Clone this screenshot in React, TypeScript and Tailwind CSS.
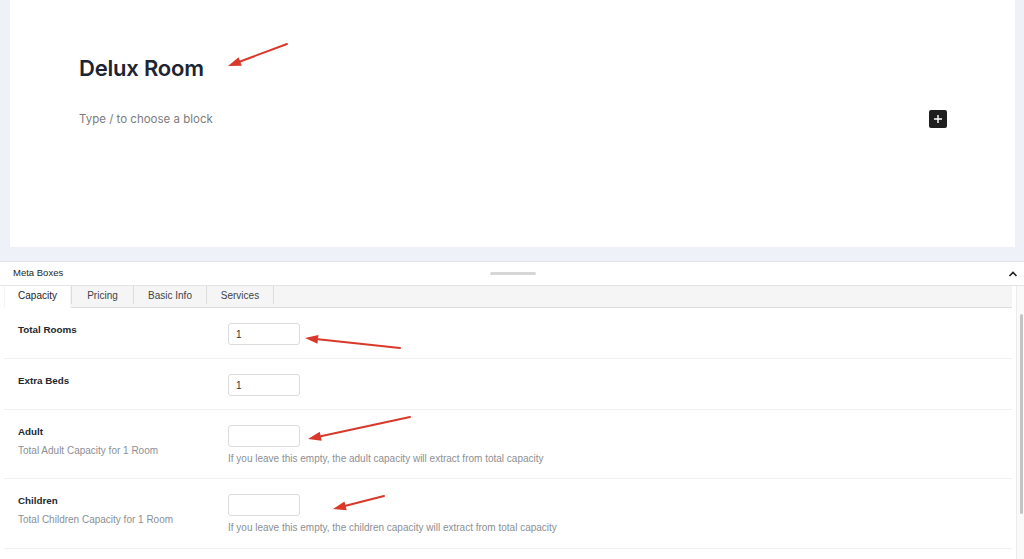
import React from "react";

const Arrow = ({ x1, y1, x2, y2 }: { x1: number; y1: number; x2: number; y2: number }) => {
  const ang = Math.atan2(y2 - y1, x2 - x1);
  const len = 13;
  const w = 4.5;
  const bx = x2 - len * Math.cos(ang);
  const by = y2 - len * Math.sin(ang);
  const px = -Math.sin(ang) * w;
  const py = Math.cos(ang) * w;
  return (
    <g>
      <line x1={x1} y1={y1} x2={bx} y2={by} stroke="#d8392b" strokeWidth={2} strokeLinecap="round" />
      <polygon points={`${x2},${y2} ${bx + px},${by + py} ${bx - px},${by - py}`} fill="#d8392b" />
    </g>
  );
};

const Row = ({
  label,
  desc,
  value,
  help,
  h,
}: {
  label: string;
  desc?: string;
  value?: string;
  help?: string;
  h: string;
}) => (
  <div className={`flex border-b border-[#f0f0f0] pl-[14px] pt-[15px] ${h}`}>
    <div className="w-[210px] shrink-0">
      <div className="text-[9.8px] leading-[14px] font-bold text-[#23282d]">{label}</div>
      {desc && <div className="mt-[5px] text-[10px] leading-[13px] text-[#8c8f94]">{desc}</div>}
    </div>
    <div className="flex flex-col">
      <div className="flex h-[22px] w-[72px] items-center rounded-[3px] border border-[#dcdcde] bg-white pl-[7px] text-[10px] text-[#2c3338]">
        {value}
      </div>
      {help && <div className="mt-[5px] text-[10px] leading-[13px] text-[#8c8f94]">{help}</div>}
    </div>
  </div>
);

export default function App() {
  return (
    <div
      className="relative h-[559px] w-[1024px] overflow-hidden bg-[#eff1f8]"
      style={{ fontFamily: '"Liberation Sans", Arial, sans-serif' }}
    >
      {/* Editor canvas */}
      <div className="pl-[10px] pr-[9px]">
        <div className="relative h-[247px] bg-white pl-[69px] pt-[54px]" style={{ fontFamily: "Inter, sans-serif" }}>
          <div className="text-[22px] font-semibold leading-[28px] text-[#1e2432] tracking-[-0.2px]">Delux Room</div>
          <div className="mt-[28px] flex items-center justify-between pr-[68px]">
            <div className="text-[11.5px] leading-[16px] text-[#7c7c7c]">Type / to choose a block</div>
            <div className="flex h-[18px] w-[18px] items-center justify-center rounded-[2px] bg-[#1e1e1e]">
              <svg width="10" height="10" viewBox="0 0 10 10">
                <path d="M5 1v8M1 5h8" stroke="white" strokeWidth="1.4" />
              </svg>
            </div>
          </div>
        </div>
      </div>

      {/* Meta boxes */}
      <div className="mt-[14px] h-[298px] border-t border-[#e2e4e7] bg-white">
        <div className="relative flex h-[24px] items-center border-b border-[#e2e4e7] pl-[13px] pr-[6px]">
          <div className="text-[9.5px] text-[#1e1e1e]">Meta Boxes</div>
          <div className="absolute left-[490px] top-[10px] h-[3px] w-[46px] rounded-full bg-[#d6d6d6]" />
          <div className="ml-auto">
            <svg width="10" height="8" viewBox="0 0 10 8">
              <path d="M1.5 6L5 2.5 8.5 6" stroke="#1e1e1e" strokeWidth="1.6" fill="none" />
            </svg>
          </div>
        </div>
        <div className="flex h-[273px]">
          <div className="flex-1 pl-[4px] pr-[4px]">
            <div className="flex h-[22px] border-b border-[#dcdcde] bg-[#f5f5f5] pb-[3px] text-[10px] text-[#3c434a]">
              <div className="relative -mb-[4px] flex w-[67px] items-center justify-center border-x border-[#f5f5f5] bg-white pb-[3px] font-medium text-[#1d2327]">
                Capacity
              </div>
              <div className="flex w-[62px] items-center justify-center border-l border-[#dcdcde]">Pricing</div>
              <div className="flex w-[73px] items-center justify-center border-l border-[#dcdcde]">Basic Info</div>
              <div className="flex w-[68px] items-center justify-center border-x border-[#dcdcde]">Services</div>
            </div>
            <Row label="Total Rooms" value="1" h="h-[51px]" />
            <Row label="Extra Beds" value="1" h="h-[51px]" />
            <Row
              label="Adult"
              desc="Total Adult Capacity for 1 Room"
              help="If you leave this empty, the adult capacity will extract from total capacity"
              h="h-[69px]"
            />
            <Row
              label="Children"
              desc="Total Children Capacity for 1 Room"
              help="If you leave this empty, the children capacity will extract from total capacity"
              h="h-[70px]"
            />
          </div>
          <div className="relative w-[8px] border-l border-[#ececec] bg-[#fafafa]">
            <div className="absolute left-[3px] top-[28px] h-[200px] w-[3px] rounded-full bg-[#c4c4c4]" />
          </div>
        </div>
      </div>

      {/* Annotation arrows */}
      <svg className="pointer-events-none absolute left-0 top-0" width="1024" height="559">
        <Arrow x1={287} y1={44} x2={228} y2={66} />
        <Arrow x1={400} y1={348} x2={305} y2={338} />
        <Arrow x1={410} y1={417} x2={308} y2={439} />
        <Arrow x1={384} y1={496} x2={333} y2={509} />
      </svg>
    </div>
  );
}
